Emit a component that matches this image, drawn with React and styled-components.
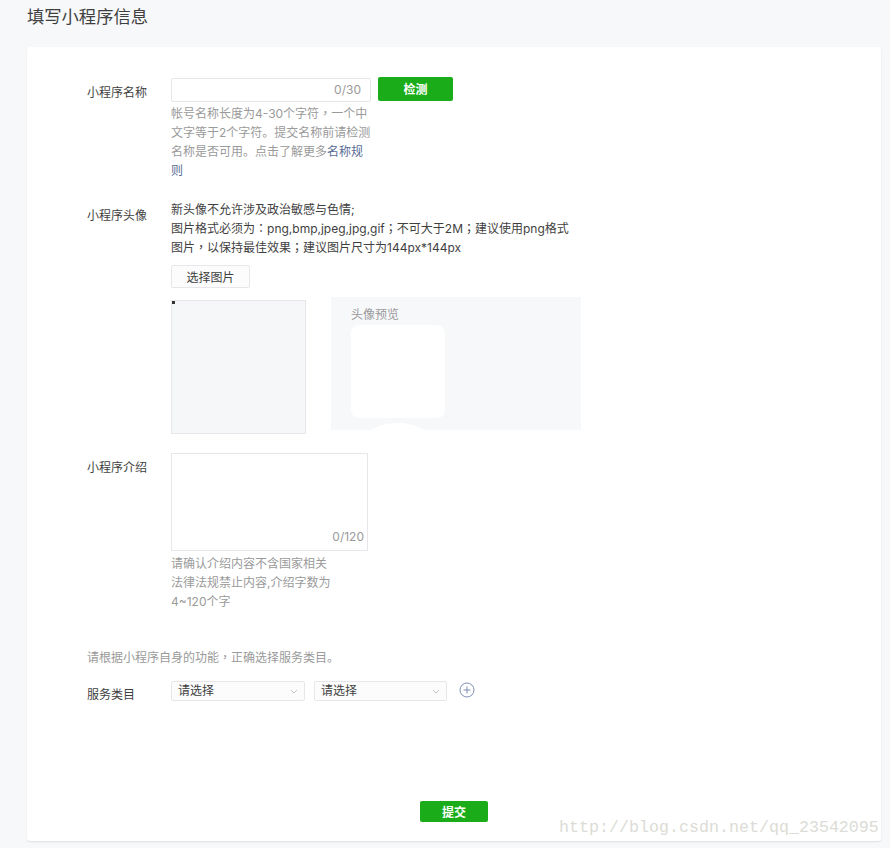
import React from "react";
import styled, { createGlobalStyle } from "styled-components";

const Global = createGlobalStyle`
  html, body { margin: 0; padding: 0; background: #f7f8fa; overflow: hidden; }
  body { font-family: "Inter", "Noto Sans CJK SC", sans-serif; font-size: 12px; color: #3f3f3f; }
`;

const Page = styled.div`
  position: relative;
  width: 890px;
  height: 848px;
  padding: 0 9px 7px 27px;
  box-sizing: border-box;
  display: flex;
  flex-direction: column;
`;
const Title = styled.h1`
  margin: 0;
  height: 47px;
  padding-top: 4px;
  box-sizing: border-box;
  font-size: 17.3px;
  line-height: 25px;
  font-weight: 400;
  color: #3f3f3f;
`;
const Card = styled.main`
  flex: 1;
  background: #fff;
  border-radius: 3px;
  box-shadow: 0 1px 2px rgba(0, 0, 0, 0.1);
  padding: 30px 0 0 60px;
  display: flex;
  flex-direction: column;
`;
const Row = styled.section`
  display: flex;
  align-items: flex-start;
  margin-bottom: ${(p) => p.$mb || 0}px;
`;
const Label = styled.label`
  width: 84px;
  flex: none;
  line-height: 19px;
  padding-top: ${(p) => p.$top || 0}px;
  color: #3f3f3f;
`;
const Column = styled.div`
  display: flex;
  flex-direction: column;
`;
const InputLine = styled.div`
  display: flex;
  align-items: flex-start;
  gap: 7px;
`;
const NameInput = styled.div`
  width: 200px;
  height: 24px;
  margin-top: 1px;
  box-sizing: border-box;
  border: 1px solid #e7e7eb;
  border-radius: 2px;
  background: #fff;
  color: #9a9a9a;
  text-align: right;
  padding-right: 9px;
  line-height: 22px;
`;
const GreenButton = styled.button`
  width: ${(p) => p.$w}px;
  height: ${(p) => p.$h}px;
  padding: 0;
  border: 0;
  border-radius: 2px;
  background: #1aad19;
  color: #fff;
  font: 700 12px/1 "Noto Sans CJK SC", sans-serif;
`;
const Help = styled.p`
  margin: ${(p) => p.$top || 0}px 0 0;
  width: ${(p) => p.$w}px;
  line-height: 19px;
  color: #9a9a9a;
`;
const Link = styled.a`
  color: #576b95;
`;
const Mark = styled.span`
  font-family: "Noto Sans CJK TC", sans-serif;
  line-height: 0;
`;
const Notes = styled.p`
  margin: 0;
  width: 410px;
  line-height: 19px;
  color: #3f3f3f;
`;
const PlainButton = styled.button`
  width: 79px;
  height: 23px;
  margin-top: 8px;
  padding: 0;
  border: 1px solid #e7e7eb;
  border-radius: 2px;
  background: #fcfcfc;
  color: #3f3f3f;
  font: 400 12px/1 "Noto Sans CJK SC", sans-serif;
`;
const AvatarArea = styled.div`
  display: flex;
  align-items: flex-start;
  gap: 25px;
  margin-top: 9px;
`;
const Cropper = styled.div`
  position: relative;
  width: 135px;
  height: 134px;
  margin-top: 3px;
  box-sizing: border-box;
  border: 1px solid #e7e7eb;
  background: #f6f7f9;
  &::before {
    content: "";
    position: absolute;
    left: 0;
    top: 0;
    width: 3px;
    height: 3px;
    background: #333;
  }
`;
const Preview = styled.div`
  position: relative;
  width: 250px;
  height: 133px;
  padding: 8px 0 0 20px;
  box-sizing: border-box;
  background: #f7f8fa;
  overflow: hidden;
`;
const PreviewTitle = styled.div`
  line-height: 19px;
  color: #9a9a9a;
`;
const PreviewImage = styled.div`
  width: 94px;
  height: 93px;
  margin-top: 1px;
  border-radius: 8px;
  background: #fff;
`;
const PreviewRound = styled.div`
  position: absolute;
  left: 12px;
  top: 126px;
  width: 110px;
  height: 110px;
  border-radius: 50%;
  background: #fff;
`;
const TextArea = styled.div`
  position: relative;
  width: 197px;
  height: 98px;
  box-sizing: border-box;
  border: 1px solid #e7e7eb;
  background: #fff;
`;
const Counter = styled.span`
  position: absolute;
  right: 3px;
  bottom: 4px;
  line-height: 19px;
  color: #9a9a9a;
`;
const Hint = styled.p`
  margin: 0 0 14px;
  line-height: 19px;
  color: #9a9a9a;
`;
const Select = styled.div`
  width: ${(p) => p.$w}px;
  height: 20px;
  box-sizing: border-box;
  border: 1px solid #e7e7eb;
  border-radius: 2px;
  background: #fcfcfc;
  padding: 0 6px;
  display: flex;
  align-items: center;
  justify-content: space-between;
  line-height: 18px;
  color: #3f3f3f;
`;
const SelectLine = styled.div`
  display: flex;
  align-items: center;
  gap: 9px;
`;
const PlusIcon = styled.svg`
  width: 16px;
  height: 16px;
  margin-left: 3px;
  margin-top: -3px;
`;
const Footer = styled.div`
  display: flex;
  margin-top: 97px;
  padding-left: 333px;
`;
const Watermark = styled.div`
  position: absolute;
  left: 559px;
  top: 818px;
  font: 400 16.67px/20px "Liberation Mono", monospace;
  color: #dcdcd6;
  white-space: nowrap;
`;

const Chevron = () => (
  <svg width="8" height="5" viewBox="0 0 8 5" fill="none" stroke="#c4c4c4" strokeWidth="1">
    <path d="M1 1l3 3 3-3" />
  </svg>
);

export default function App() {
  return (
    <Page>
      <Global />
      <Title>填写小程序信息</Title>
      <Card>
        <Row $mb={20}>
          <Label $top={6}>小程序名称</Label>
          <Column>
            <InputLine>
              <NameInput>0/30</NameInput>
              <GreenButton $w={75} $h={24}>检测</GreenButton>
            </InputLine>
            <Help $top={2} $w={203}>
              帐号名称长度为4-30个字符<Mark>，</Mark>一个中文字等于2个字符。提交名称前请检测名称是否可用。点击了解更多<Link>名称规则</Link>
            </Help>
          </Column>
        </Row>
        <Row $mb={19}>
          <Label $top={6}>小程序头像</Label>
          <Column>
            <Notes>
              新头像不允许涉及政治敏感与色情;
              <br />
              图片格式必须为<Mark>：</Mark>png,bmp,jpeg,jpg,gif<Mark>；</Mark>不可大于2M<Mark>；</Mark>建议使用png格式
              <br />
              图片<Mark>，</Mark>以保持最佳效果<Mark>；</Mark>建议图片尺寸为144px*144px
            </Notes>
            <PlainButton>选择图片</PlainButton>
            <AvatarArea>
              <Cropper />
              <Preview>
                <PreviewTitle>头像预览</PreviewTitle>
                <PreviewImage />
                <PreviewRound />
              </Preview>
            </AvatarArea>
          </Column>
        </Row>
        <Row $mb={37}>
          <Label $top={5}>小程序介绍</Label>
          <Column>
            <TextArea>
              <Counter>0/120</Counter>
            </TextArea>
            <Help $top={3} $w={190}>
              请确认介绍内容不含国家相关
              <br />
              法律法规禁止内容,介绍字数为
              <br />
              4~120个字
            </Help>
          </Column>
        </Row>
        <Hint>请根据小程序自身的功能<Mark>，</Mark>正确选择服务类目。</Hint>
        <Row>
          <Label $top={4}>服务类目</Label>
          <SelectLine>
            <Select $w={134}>请选择<Chevron /></Select>
            <Select $w={133}>请选择<Chevron /></Select>
            <PlusIcon viewBox="0 0 16 16" fill="none" stroke="#7f8fb3" strokeWidth="1">
              <circle cx="8" cy="8" r="7" />
              <path d="M8 4.5v7M4.5 8h7" />
            </PlusIcon>
          </SelectLine>
        </Row>
        <Footer>
          <GreenButton $w={68} $h={21}>提交</GreenButton>
        </Footer>
      </Card>
      <Watermark>http://blog.csdn.net/qq_23542095</Watermark>
    </Page>
  );
}
